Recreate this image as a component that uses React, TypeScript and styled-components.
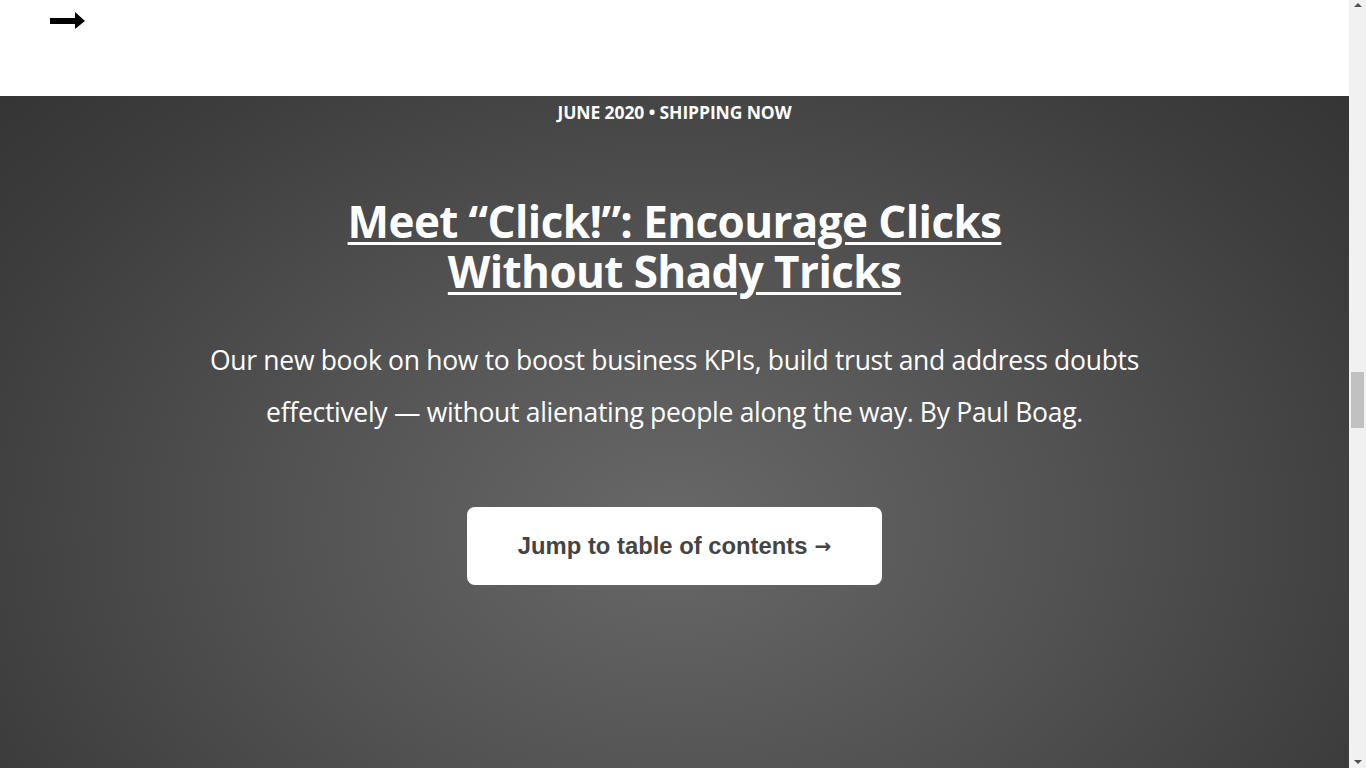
import React from "react";
import styled, { createGlobalStyle } from "styled-components";

const Global = createGlobalStyle`
  html, body { margin: 0; padding: 0; overflow: hidden; }
  body { background: #fff; font-family: "Open Sans", "Liberation Sans", sans-serif; }
`;

const Frame = styled.div`
  display: flex;
  height: 100vh;
  width: 100vw;
`;

const Page = styled.main`
  flex: 1;
  min-width: 0;
  overflow: hidden;
`;

const ScrollBar = styled.aside`
  width: 17px;
  flex: 0 0 17px;
  background: #f1f1f1;
  display: flex;
  flex-direction: column;
  align-items: center;
  justify-content: space-between;
  position: relative;
`;

const ScrollArrow = styled.div<{ $down?: boolean }>`
  width: 17px;
  height: 17px;
  display: flex;
  align-items: center;
  justify-content: center;
  &::before {
    content: "";
    width: 0;
    height: 0;
    border-left: 4px solid transparent;
    border-right: 4px solid transparent;
    ${(p) => (p.$down ? "border-top: 4px solid #505050;" : "border-bottom: 4px solid #505050;")}
    margin-top: ${(p) => (p.$down ? "4px" : "-8px")};
  }
`;

const Thumb = styled.div`
  position: absolute;
  top: 372px;
  left: 2px;
  width: 13px;
  height: 56px;
  background: #c1c1c1;
`;

const Header = styled.header`
  height: 96px;
  background: #fff;
  display: flex;
  align-items: flex-start;
  padding: 12px 0 0 50px;
  box-sizing: border-box;
`;

const Hero = styled.section`
  background: radial-gradient(ellipse 70% 75% at 50% 48%, #686868 0%, #525252 42%, #3d3d3d 78%, #333 100%);
  color: #fff;
  display: flex;
  flex-direction: column;
  align-items: center;
  padding: 100px 0 260px;
  position: relative;
  min-height: 900px;
  box-sizing: border-box;
`;

const Kicker = styled.p`
  position: absolute;
  top: 0;
  left: 0;
  right: 0;
  margin: 0;
  text-align: center;
  font-family: "Open Sans", sans-serif;
  font-weight: 700;
  font-size: 17.5px;
  line-height: 32px;
  letter-spacing: -0.1px;
`;

const Title = styled.h1`
  margin: 0;
  text-align: center;
  font-family: "Open Sans", sans-serif;
  font-weight: 700;
  font-size: 44px;
  line-height: 50px;
  letter-spacing: -0.6px;
  width: 760px;
  a {
    color: #fff;
    text-decoration: underline;
    text-decoration-thickness: 3px;
    text-underline-offset: 4px;
  }
`;

const Lead = styled.p`
  margin: 38px 0 0;
  width: 960px;
  text-align: center;
  font-family: "Open Sans", sans-serif;
  font-size: 26.5px;
  line-height: 52px;
  letter-spacing: -0.3px;
`;

const Button = styled.a`
  margin-top: 69px;
  width: 415px;
  height: 78px;
  background: #fff;
  border-radius: 8px;
  display: flex;
  align-items: center;
  justify-content: center;
  gap: 7px;
  color: #444;
  text-decoration: none;
  font-family: "Liberation Sans", Arial, sans-serif;
  font-weight: 700;
  font-size: 23.8px;
`;

const ButtonArrow = styled.span`
  font-family: "DejaVu Sans", sans-serif;
  font-weight: 700;
  font-size: 20px;
`;

const Arrow = () => (
  <svg width="36" height="18" viewBox="0 0 36 18">
    <rect x="0" y="6" width="26" height="6" fill="#000" />
    <polygon points="25,0 35,9 25,17" fill="#000" />
  </svg>
);

export default function App() {
  return (
    <>
      <Global />
      <Frame>
        <Page>
          <Header>
            <Arrow />
          </Header>
          <Hero>
            <Kicker>JUNE 2020 • SHIPPING NOW</Kicker>
            <Title>
              <a href="#">Meet “Click!”: Encourage Clicks Without Shady Tricks</a>
            </Title>
            <Lead>
              Our new book on how to boost business KPIs, build trust and address doubts effectively — without alienating people along the way. By Paul Boag.
            </Lead>
            <Button href="#">
              Jump to table of contents
              <ButtonArrow>→</ButtonArrow>
            </Button>
          </Hero>
        </Page>
        <ScrollBar>
          <ScrollArrow />
          <Thumb />
          <ScrollArrow $down />
        </ScrollBar>
      </Frame>
    </>
  );
}
